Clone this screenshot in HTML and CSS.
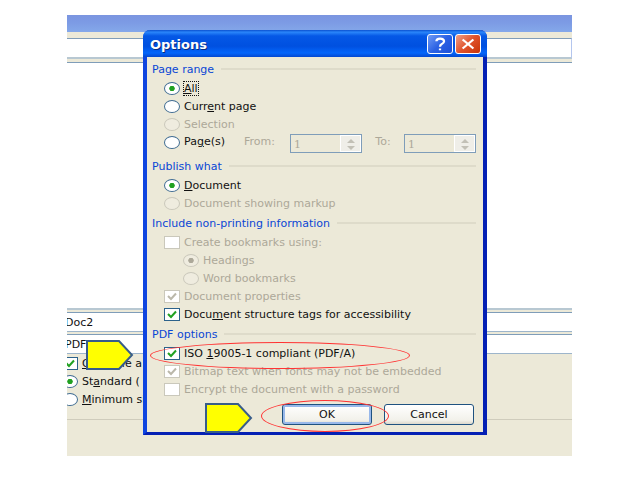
FILE: index.html
```html
<!DOCTYPE html>
<html lang="en">
<head>
  <meta charset="UTF-8" />
  <title>Options</title>
  <link rel="stylesheet" href="styles.css">
</head>
<body>
  <main class="desktop">

    <!-- Window behind the dialog -->
    <section class="save-window">
      <div class="save-title"></div>
      <div class="look-in"><div class="look-in-box"></div></div>
      <div class="file-list"></div>
      <div class="file-fields">
        <input type="text" class="file-field" value="Doc2" aria-label="File name" />
        <input type="text" class="file-field" value="PDF" aria-label="Save as type" />
      </div>
      <div class="save-options">
        <label class="row"><input type="checkbox" checked /><span><u>O</u>pen file a</span></label>
        <label class="row"><input type="radio" name="optimize" checked /><span>St<u>a</u>ndard (</span></label>
        <label class="row"><input type="radio" name="optimize" /><span><u>M</u>inimum si</span></label>
      </div>
      <div class="save-footer"></div>
    </section>

    <!-- Options dialog -->
    <form class="dialog">
      <header class="title-bar">
        <h1>Options</h1>
        <button type="button" class="title-btn help" aria-label="Help">
          <svg viewBox="0 0 26 20"><path d="M9 7 Q9 4 13 4 Q17.500 4 17.500 7 Q17.500 9 15 10 Q13 11 13 13 M13 15 V17" /></svg>
        </button>
        <button type="button" class="title-btn close" aria-label="Close">
          <svg viewBox="0 0 26 20"><path d="M7 5 L19 15 M19 5 L7 15" /></svg>
        </button>
      </header>

      <div class="dialog-body">
        <section class="group">
          <h2>Page range</h2>
          <label class="row"><input type="radio" name="range" checked /><span class="focused"><u>A</u>ll</span></label>
          <label class="row"><input type="radio" name="range" /><span>Curr<u>e</u>nt page</span></label>
          <label class="row off"><input type="radio" name="range" disabled /><span>Selection</span></label>
          <div class="pages">
            <label class="row pages-label"><input type="radio" name="range" /><span>Pa<u>g</u>e(s)</span></label>
            <label class="from" for="from">From:</label>
            <div class="spinner">
              <input type="text" id="from" value="1" disabled />
              <button type="button" disabled aria-label="Change first page"><svg viewBox="0 0 10 12"><path d="M1 5 L5 1 L9 5 Z M1 8 H9 L5 12 Z" /></svg></button>
            </div>
            <label class="to" for="to">To:</label>
            <div class="spinner">
              <input type="text" id="to" value="1" disabled />
              <button type="button" disabled aria-label="Change last page"><svg viewBox="0 0 10 12"><path d="M1 5 L5 1 L9 5 Z M1 8 H9 L5 12 Z" /></svg></button>
            </div>
          </div>
        </section>

        <section class="group">
          <h2>Publish what</h2>
          <label class="row"><input type="radio" name="what" checked /><span><u>D</u>ocument</span></label>
          <label class="row off"><input type="radio" name="what" disabled /><span>Document showing markup</span></label>
        </section>

        <section class="group">
          <h2>Include non-printing information</h2>
          <label class="row off"><input type="checkbox" disabled /><span>Create bookmarks using:</span></label>
          <label class="row off indent"><input type="radio" name="bookmarks" checked disabled /><span>Headings</span></label>
          <label class="row off indent"><input type="radio" name="bookmarks" disabled /><span>Word bookmarks</span></label>
          <label class="row off"><input type="checkbox" checked disabled /><span>Document properties</span></label>
          <label class="row"><input type="checkbox" checked /><span>Docu<u>m</u>ent structure tags for accessibility</span></label>
        </section>

        <section class="group">
          <h2>PDF options</h2>
          <label class="row"><input type="checkbox" checked /><span>ISO <u>1</u>9005-1 compliant (PDF/A)</span></label>
          <label class="row off"><input type="checkbox" checked disabled /><span>Bitmap text when fonts may not be embedded</span></label>
          <label class="row off"><input type="checkbox" disabled /><span>Encrypt the document with a password</span></label>
        </section>

        <footer class="actions">
          <button type="button" class="btn default">OK</button>
          <button type="button" class="btn">Cancel</button>
        </footer>
      </div>
    </form>

    <!-- Marks drawn over the windows -->
    <svg class="arrow arrow-iso" viewBox="0 0 48 30"><path d="M1 1 H33 L46 15 L33 29 H1 Z" /></svg>
    <svg class="arrow arrow-ok" viewBox="0 0 48 30"><path d="M1 1 H33 L46 15 L33 29 H1 Z" /></svg>
    <div class="ring ring-iso"></div>
    <div class="ring ring-ok"></div>
  </main>
</body>
</html>
```

FILE: styles.css
```css
* {
  box-sizing: border-box;
}

body {
  margin: 0;
  background: #fff;
  color: #111;
  font-family: "DejaVu Sans", Verdana, sans-serif;
  font-size: 11px;
}

button, input {
  font: inherit;
  color: inherit;
}

.desktop {
  position: relative;
  margin: 15px 47px 36px 67px;
}

/* Window behind */
.save-window {
  overflow: hidden;
  background: #ece9d8;
}

.save-title {
  height: 17px;
  background: linear-gradient(#7b95e0, #7c9ae4 40%, #84a8ea);
}

.look-in {
  padding: 6px 0 3px;
}

.look-in-box {
  height: 21px;
  background: #fff;
  border-top: 1px solid #7f9db9;
  border-right: 1px solid #b4c6ee;
  border-bottom: 2px solid #b8c8d2;
}

.file-list {
  height: 248px;
  background: #fff;
  border-top: 1px solid #7f9db9;
  border-bottom: 2px solid #b8c8d2;
}

.file-fields {
  display: flex;
  flex-direction: column;
  gap: 2px;
  padding-top: 2px;
}

.file-field {
  width: 100%;
  height: 20px;
  margin: 0;
  padding: 0;
  text-indent: -2px;
  background: #fff;
  border: 0;
  border-top: 1px solid #7f9db9;
  border-bottom: 1px solid #9db5cb;
}

.save-options {
  margin-left: -5px;
  height: 66px;
  border-bottom: 1px solid #cfccbc;
}

.save-footer {
  height: 36px;
}

/* Check and radio rows */
.row {
  display: flex;
  align-items: center;
  gap: 4px;
  height: 18px;
  white-space: nowrap;
}

.row u {
  text-underline-offset: 1px;
}

.row input {
  appearance: none;
  flex: none;
  width: 16px;
  height: 13px;
  margin: 0;
  border: 1px solid #2c628b;
  background: #fff center no-repeat;
}

.row input[type="radio"] {
  border-color: #3f6c92;
  border-radius: 50%;
}

.row input[type="radio"]:checked {
  background-image: radial-gradient(ellipse 3px 3px, #21a121 80%, transparent);
}

.row input[type="checkbox"]:checked {
  background-image: url("data:image/svg+xml,%3Csvg xmlns='http://www.w3.org/2000/svg' width='10' height='9'%3E%3Cpath d='M1 4 L4 7 L9 1.500' fill='none' stroke='%2321a121' stroke-width='2'/%3E%3C/svg%3E");
}

.off {
  color: #aca899;
}

.row input:disabled {
  border-color: #cac8bb;
}

.row input[type="radio"]:disabled {
  background-color: #efecdf;
}

.row input[type="radio"]:checked:disabled {
  background-image: radial-gradient(ellipse 3px 3px, #aca899 80%, transparent);
}

.row input[type="checkbox"]:checked:disabled {
  background-image: url("data:image/svg+xml,%3Csvg xmlns='http://www.w3.org/2000/svg' width='10' height='9'%3E%3Cpath d='M1 4 L4 7 L9 1.500' fill='none' stroke='%23bbb8aa' stroke-width='2'/%3E%3C/svg%3E");
}

.focused {
  outline: 1px dotted #111;
}

/* Dialog */
.dialog {
  position: absolute;
  top: 15px;
  left: 76px;
  right: 85px;
  background: #ece9d8;
  border: 4px solid #0f45e0;
  border-top: 0;
  border-right-color: #0420b4;
  border-bottom: 3px solid #0420b4;
  border-radius: 7px 7px 0 0;
}

.title-bar {
  display: flex;
  align-items: center;
  gap: 2px;
  height: 27px;
  margin: 0 -4px;
  padding: 1px 6px 0 7px;
  border-radius: 7px 7px 0 0;
  background: linear-gradient(#0a50d0, #2a86fa 8%, #0558e6 22%, #0050e0 60%, #0466fb 85%, #0448d0);
}

.title-bar h1 {
  flex: 1;
  margin: 0;
  color: #fff;
  font-size: 13px;
  text-shadow: 1px 1px #0a2c80;
}

.title-btn {
  width: 26px;
  height: 20px;
  padding: 0;
  border: 1px solid #fff;
  border-radius: 3px;
}

.title-btn svg {
  display: block;
  width: 100%;
  height: 100%;
  fill: none;
  stroke: #fff;
  stroke-width: 2.500;
}

.help {
  background: linear-gradient(135deg, #6f9bf5, #2c62e4 50%, #1c50d8);
}

.close {
  background: linear-gradient(135deg, #f0a088, #e0522c 50%, #c83408);
}

.dialog-body {
  padding: 2px 7px 7px 5px;
}

.group {
  margin-bottom: 1px;
}

.group h2 {
  display: flex;
  align-items: center;
  gap: 7px;
  height: 20px;
  margin: 0;
  color: #0a46d5;
  font-size: 11px;
  font-weight: normal;
  white-space: nowrap;
}

.group h2::after {
  content: "";
  flex: 1;
  height: 2px;
  background: #dedbca;
}

.group .row {
  padding-left: 12px;
}

.group .indent {
  padding-left: 31px;
}

.pages {
  display: flex;
  height: 22px;
  color: #aca899;
  line-height: 18px;
}

.pages-label {
  width: 92px;
  color: #111;
}

.from {
  flex: 46;
}

.to {
  flex: 42;
  text-align: center;
}

.spinner {
  display: flex;
  width: 72px;
  height: 19px;
  margin-top: 1px;
  border: 1px solid #7f9db9;
}

.spinner input {
  flex: 1;
  min-width: 0;
  padding: 2px 3px 0;
  border: 0;
  background: none;
  color: #aca899;
  font-family: "DejaVu Serif", serif;
}

.spinner button {
  width: 21px;
  padding: 0;
  border: 1px solid #fff;
  background: #efeee8;
}

.spinner svg {
  display: block;
  width: 10px;
  height: 12px;
  margin: auto;
  fill: #c2c0b6;
}

.actions {
  display: flex;
  justify-content: flex-end;
  gap: 12px;
  padding: 5px 2px 0 0;
}

.btn {
  width: 90px;
  height: 21px;
  padding: 0;
  border: 1px solid #1f5280;
  border-radius: 3px;
  background: linear-gradient(#fff, #f2f1ea 80%, #dcd8cc);
}

.default {
  box-shadow: inset 0 0 0 2px #98b8ea;
}

/* Marks */
.arrow {
  position: absolute;
  width: 48px;
  height: 30px;
  fill: #ff0;
  stroke: #385d8a;
  stroke-width: 2;
}

.arrow-iso {
  left: 19px;
  top: 325px;
}

.arrow-ok {
  left: 138px;
  top: 388px;
}

.ring {
  position: absolute;
  border: 1px solid #f33;
  border-radius: 50%;
  pointer-events: none;
}

.ring-iso {
  left: 83px;
  top: 327px;
  width: 260px;
  height: 27px;
}

.ring-ok {
  left: 194px;
  top: 385px;
  width: 128px;
  height: 32px;
}
```
